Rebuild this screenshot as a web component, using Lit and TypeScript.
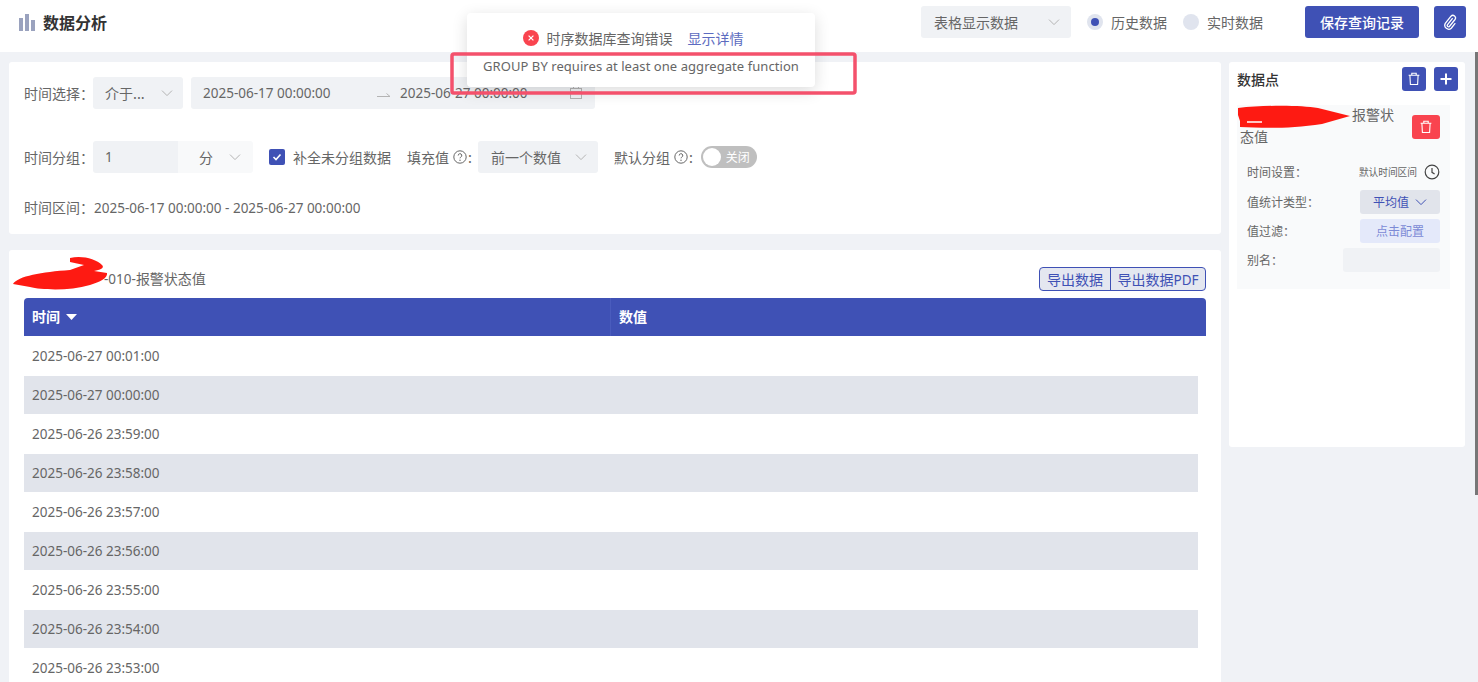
import { LitElement, html, css } from "lit";
import { customElement } from "lit/decorators.js";

const chevron = html`<svg class="chev" width="12" height="12" viewBox="0 0 12 12"><path d="M1 3.6 6 8.6l5-5" fill="none" stroke="currentColor" stroke-width="1"/></svg>`;
const q = html`<svg class="q" width="14" height="14" viewBox="0 0 14 14"><circle cx="7" cy="7" r="6.2" fill="none" stroke="#666" stroke-width="1"/><path d="M5.2 5.5a1.8 1.8 0 1 1 2.6 1.6c-.6.3-.8.6-.8 1.2" fill="none" stroke="#666" stroke-width="1"/><circle cx="7" cy="10.2" r=".7" fill="#666"/></svg>`;
const trash = html`<svg width="14" height="14" viewBox="0 0 14 14" fill="none" stroke="#fff" stroke-width="1.1"><path d="M1.6 3.2h10.8M4.8 3V1.2h4.4V3M2.9 3.4l.5 9.1h7.2l.5-9.1"/></svg>`;
const rows = ["2025-06-27 00:01:00","2025-06-27 00:00:00","2025-06-26 23:59:00","2025-06-26 23:58:00","2025-06-26 23:57:00","2025-06-26 23:56:00","2025-06-26 23:55:00","2025-06-26 23:54:00","2025-06-26 23:53:00"];

@customElement("app-root")
export class AppRoot extends LitElement {
  static styles = css`
    :host { display: block; position: relative; height: 682px; overflow: hidden; background: #f0f2f6; color: #666; font: 14px/20px "Noto Sans CJK SC", "Noto Sans", sans-serif; }
    * { box-sizing: border-box; }
    .n { font-family: "Noto Sans", "Noto Sans CJK SC", sans-serif; font-size: 13.5px; }
    .top { height: 52px; background: #fff; display: flex; align-items: center; padding: 0 12px 8px 19px; }
    .title { display: flex; align-items: center; gap: 8px; font-weight: 700; font-size: 16px; color: #333; flex: 1; }
    .field { background: #f0f2f5; border-radius: 3px; display: flex; align-items: center; height: 32px; color: #666; }
    .chev { color: #b4b4b4; flex: none; }
    .disp { width: 150px; padding: 0 11px 0 13px; justify-content: space-between; }
    .radio { display: flex; align-items: center; gap: 8px; margin-left: 16px; }
    .dot { width: 16px; height: 16px; border-radius: 50%; background: #e0e4ee; display: flex; align-items: center; justify-content: center; }
    .dot.on::after { content: ""; width: 8px; height: 8px; border-radius: 50%; background: #3f51b5; }
    .btn { background: #3f51b5; color: #fff; border-radius: 3px; display: flex; align-items: center; justify-content: center; }
    .save { width: 114px; height: 32px; margin-left: 42px; font-weight: 500; }
    .clip { width: 32px; height: 32px; margin-left: 15px; }
    .main { display: flex; gap: 8px; padding: 10px 13px 0 9px; align-items: flex-start; }
    .left { width: 1212px; display: flex; flex-direction: column; gap: 16px; flex: none; }
    .card { background: #fff; border-radius: 3px; }
    .filters { height: 172px; padding: 15px; display: flex; flex-direction: column; }
    .line { display: flex; align-items: center; height: 32px; }
    .line + .line { margin-top: 32px; }
    .line.range { margin-top: 24px; height: 20px; }
    .range .n { margin: 2px 0 0 1px; }
    .lab { width: 69px; flex: none; white-space: nowrap; }
    .mode { width: 90px; padding: 0 10px 0 12px; justify-content: space-between; }
    .dates { width: 404px; margin-left: 8px; padding: 0 12px; }
    .dates span:nth-child(1) { width: 174px; }
    .dates .arr { width: 23px; flex: none; }
    .dates .d2 { flex: 1; }
    .num { width: 85px; padding: 0 12px; border-radius: 3px 0 0 3px; }
    .unit { width: 75px; background: #f8f9fa; border-radius: 0 3px 3px 0; padding: 0 12px 0 21px; justify-content: space-between; }
    .check { width: 16px; height: 16px; margin-left: 16px; margin-right: 8px; background: #3f51b5; border-radius: 2px; display: flex; align-items: center; justify-content: center; }
    .hint { margin-left: 16px; display: flex; align-items: center; }
    .hint .q { margin: 0 1px 0 4px; }
    .fill { width: 120px; margin-left: 6px; padding: 0 11px 0 13px; justify-content: space-between; }
    .switch { width: 56px; height: 22px; border-radius: 11px; background: #bfbfbf; margin-left: 8px; position: relative; color: #fff; font-size: 12px; display: flex; align-items: center; padding-left: 25px; }
    .switch::before { content: ""; position: absolute; left: 2px; top: 2px; width: 18px; height: 18px; border-radius: 50%; background: #fff; }
    .tcard { height: 500px; padding: 16px 15px 0; }
    .thead { display: flex; justify-content: space-between; align-items: center; height: 32px; }
    .tname { padding-left: 80px; margin-top: -7px; }
    .group { display: flex; height: 24px; border: 1px solid #3f51b5; border-radius: 4px; background: #e4e7f0; color: #3f51b5; line-height: 22px; margin-top: -6px; }
    .group > span { width: 70px; text-align: center; }
    .group > span + span { width: 95px; border-left: 1px solid #3f51b5; }
    .hrow { height: 38px; background: #3f51b5; color: #fff; font-weight: 700; display: grid; grid-template-columns: 586px 1fr; align-items: center; border-radius: 4px 4px 0 0; }
    .hrow > div { padding: 0 0 2px 8px; display: flex; align-items: center; gap: 6px; height: 100%; }
    .hrow svg { margin-top: 2px; }
    .hrow > div + div { border-left: 1px solid #4a5cbd; }
    .row { width: 1174px; height: 39px; line-height: 39px; padding: 0 8px; border-top: 1px solid transparent; }
    .row:nth-child(even) { background: #e1e4eb; background-clip: padding-box; }
    .side { width: 236px; height: 385px; padding: 0 7px 0 8px; position: relative; flex: none; }
    .shead { height: 34px; display: flex; align-items: center; gap: 8px; }
    .shead b { flex: 1; font-weight: 500; color: #333; font-size: 14px; }
    .sq { width: 24px; height: 24px; }
    .item { margin-top: 9px; background: #f9fafb; height: 184px; padding: 0 10px 0 3px; width: 213px; }
    .ititle { display: flex; justify-content: space-between; }
    .ititle p { margin: -2px 0 0 0; width: 155px; line-height: 22px; text-indent: 112px; }
    .del { width: 28px; height: 24px; background: #f9444f; margin-top: 10px; }
    .prop { display: flex; justify-content: space-between; align-items: center; font-size: 12px; height: 24px; margin-left: 7px; margin-top: 5px; }
    .prop.first { margin-top: 15px; height: 20px; }
    .prop.second { margin-top: 8px; }
    .tset { display: flex; align-items: center; gap: 7px; font-size: 9.7px; }
    .pill { width: 80px; height: 24px; border-radius: 3px; display: flex; align-items: center; justify-content: center; gap: 6px; }
    .avg { background: #e1e4eb; color: #3f51b5; }
    .avg .chev { color: #3f51b5; }
    .cfg { background: #e4e9fa; color: #7c8ad6; }
    .alias { width: 97px; height: 24px; background: #f0f2f5; border-radius: 3px; }
    .toast { position: absolute; left: 467px; top: 13px; width: 348px; height: 74px; background: #fff; border-radius: 4px; box-shadow: 0 4px 16px rgba(0,0,0,.14); padding: 15px 16px; }
    .t1 { display: flex; align-items: center; justify-content: center; gap: 8px; height: 20px; padding-right: 16px; }
    .t1 a { color: #5c6bc0; margin-left: 7px; }
    .t2 { margin-top: 9px; text-align: center; white-space: nowrap; font: 13px/18px "Noto Sans", sans-serif; letter-spacing: .06px; }
    .mark { position: absolute; left: 0; top: 0; pointer-events: none; }
    .scroll { position: absolute; right: 0; top: 52px; width: 3px; height: 443px; background: #777; }
  `;
  render() {
    return html`
      <div class="top">
        <div class="title">
          <svg width="16" height="17" viewBox="0 0 16 17" fill="#9aa2be"><rect y="4" width="4" height="13"/><rect x="6" width="4" height="17"/><rect x="12" y="6" width="4" height="11"/></svg>
          数据分析
        </div>
        <div class="field disp"><span>表格显示数据</span>${chevron}</div>
        <div class="radio"><i class="dot on"></i>历史数据</div>
        <div class="radio"><i class="dot"></i>实时数据</div>
        <div class="btn save">保存查询记录</div>
        <div class="btn clip"><svg width="16" height="16" viewBox="0 0 16 16" fill="none" stroke="#fff" stroke-width="1.3" stroke-linecap="round"><path d="M10.3 4.6 5.4 10.9a1.3 1.3 0 0 0 2 1.6l5.6-7a2.6 2.6 0 0 0-4-3.3l-5.7 7.2a3.9 3.9 0 0 0 6 4.8l3.6-4.6"/></svg></div>
      </div>
      <div class="main">
        <div class="left">
          <div class="card filters">
            <div class="line"><span class="lab">时间选择：</span>
              <div class="field mode"><span>介于...</span>${chevron}</div>
              <div class="field dates"><span class="n">2025-06-17 00:00:00</span><span class="arr"><svg width="14" height="8" viewBox="0 0 14 8" fill="none" stroke="#b4b4b4"><path d="M0 5.5h13L9.5 2.5"/></svg></span><span class="d2 n">2025-06-27 00:00:00</span>
                <svg width="14" height="14" viewBox="0 0 14 14" fill="none" stroke="#b4b4b4"><rect x="1.5" y="2.5" width="11" height="10"/><path d="M1.5 5.5h11M4.5 1v2M9.5 1v2"/></svg>
              </div>
            </div>
            <div class="line"><span class="lab">时间分组：</span>
              <div class="field num n">1</div>
              <div class="field unit"><span>分</span>${chevron}</div>
              <div class="check"><svg width="12" height="12" viewBox="0 0 12 12"><path d="M2.5 6 5 8.5 9.5 3.5" fill="none" stroke="#fff" stroke-width="1.6"/></svg></div>
              补全未分组数据
              <div class="hint">填充值${q}:</div>
              <div class="field fill"><span>前一个数值</span>${chevron}</div>
              <div class="hint">默认分组${q}:</div>
              <div class="switch">关闭</div>
            </div>
            <div class="line range"><span class="lab">时间区间：</span><span class="n">2025-06-17 00:00:00 - 2025-06-27 00:00:00</span></div>
          </div>
          <div class="card tcard">
            <div class="thead"><div class="tname"><span class="n">-010-</span>报警状态值</div><div class="group"><span>导出数据</span><span>导出数据<span class="n">PDF</span></span></div></div>
            <div class="hrow"><div>时间 <svg width="11" height="7" viewBox="0 0 11 7"><path d="M0 0h11L5.5 6z" fill="#fff"/></svg></div><div>数值</div></div>
            <div>${rows.map(r => html`<div class="row n">${r}</div>`)}</div>
          </div>
        </div>
        <div class="card side">
          <div class="shead"><b>数据点</b><div class="btn sq">${trash}</div><div class="btn sq"><svg width="14" height="14" viewBox="0 0 14 14"><path d="M7 1.5v11M1.5 7h11" stroke="#fff" stroke-width="2"/></svg></div></div>
          <div class="item">
            <div class="ititle"><p>报警状态值</p><div class="btn del">${trash}</div></div>
            <div class="prop first">时间设置：<span class="tset">默认时间区间 <svg width="16" height="16" viewBox="0 0 16 16" fill="none" stroke="#444" stroke-width="1.2"><circle cx="8" cy="8" r="6.8"/><path d="M8 4v4.3l2.6 1.6"/></svg></span></div>
            <div class="prop second">值统计类型：<div class="pill avg">平均值 ${chevron}</div></div>
            <div class="prop">值过滤：<div class="pill cfg">点击配置</div></div>
            <div class="prop">别名：<div class="alias"></div></div>
          </div>
        </div>
      </div>
      <div class="toast">
        <div class="t1"><svg width="16" height="16" viewBox="0 0 16 16"><circle cx="8" cy="8" r="8" fill="#f9444f"/><path d="M5.6 5.6l4.8 4.8M10.4 5.6l-4.8 4.8" stroke="#fff" stroke-width="1.2"/></svg>时序数据库查询错误<a>显示详情</a></div>
        <div class="t2">GROUP BY requires at least one aggregate function</div>
      </div>
      <svg class="mark" width="1478" height="682" viewBox="0 0 1478 682">
        <rect x="452" y="54" width="403" height="39" rx="2" fill="none" stroke="#f4516c" stroke-width="3.5"/>
        <path d="M1238 108C1265 105 1300 105 1318 108L1350 116 1322 124C1290 129 1262 128 1240 127L1240 121 1238 115Z" fill="#fe1a12"/>
        <path d="M1247 122h15" stroke="#fff" stroke-width="1.5"/>
        <path d="M70 258C82 255 96 259 102 265 105 268 100 270 94 271L107 273C108 278 100 282 90 285 70 291 42 290 30 287L13 284C18 276 42 272 70 270L84 265 70 262Z" fill="#fe1a12"/>
      </svg>
      <div class="scroll"></div>
    `;
  }
}
